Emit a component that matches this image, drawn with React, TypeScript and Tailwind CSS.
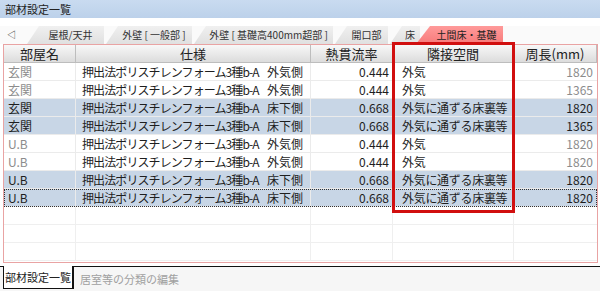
import React from "react";

interface Row {
    room: string;
    spec: string;
    side: string;
    u: string;
    adj: string;
    len: string;
    sel: boolean;
    focus?: boolean;
}

const spec = "押出法ポリスチレンフォーム3種b-A";

const rows: Row[] = [
    { room: "玄関", spec, side: "外気側", u: "0.444", adj: "外気", len: "1820", sel: false },
    { room: "玄関", spec, side: "外気側", u: "0.444", adj: "外気", len: "1365", sel: false },
    { room: "玄関", spec, side: "床下側", u: "0.668", adj: "外気に通ずる床裏等", len: "1820", sel: true },
    { room: "玄関", spec, side: "床下側", u: "0.668", adj: "外気に通ずる床裏等", len: "1365", sel: true },
    { room: "U.B", spec, side: "外気側", u: "0.444", adj: "外気", len: "1820", sel: false },
    { room: "U.B", spec, side: "外気側", u: "0.444", adj: "外気", len: "1820", sel: false },
    { room: "U.B", spec, side: "床下側", u: "0.668", adj: "外気に通ずる床裏等", len: "1820", sel: true },
    { room: "U.B", spec, side: "床下側", u: "0.668", adj: "外気に通ずる床裏等", len: "1820", sel: true, focus: true },
];

const tabs = [
    { label: "屋根/天井", w: "w-[77px]" },
    { label: "外壁 [ 一般部 ]", w: "w-[86px]" },
    { label: "外壁 [ 基礎高400mm超部 ]", w: "w-[139px]" },
    { label: "開口部", w: "w-[53px]" },
    { label: "床", w: "w-[30px]" },
];

const headers = ["部屋名", "仕様", "熱貫流率", "隣接空間", "周長(mm)"];

const cols = "grid grid-cols-[72px_235px_82px_121px_83px]";

export default function App() {
    return (
        <div className="relative w-[600px] h-[291px] overflow-hidden bg-white font-['Noto_Sans_CJK_JP',sans-serif] text-[#1e1e1e]">
            {/* Title bar */}
            <div className="h-[18px] bg-gradient-to-b from-[#c9dbf0] to-[#bcd1ea] flex items-center pl-[5px] text-[11px] leading-none text-[#222]">
                部材設定一覧
            </div>

            {/* Sheet tabs */}
            <div className="mt-[8px] h-[18px] flex items-stretch bg-[#fafafa]">
                <div className="w-[27px] flex items-center pl-[7px] text-[9px] text-[#333]">◁</div>
                {tabs.map((t) => (
                    <div
                        key={t.label}
                        className={`${t.w} mr-[2px] bg-gradient-to-b from-[#f0f0f0] to-[#e0e0e0] [clip-path:polygon(12px_0,100%_0,100%_100%,0_100%)] flex items-center justify-center pl-[10px] text-[10px] leading-none text-[#333] whitespace-nowrap`}
                    >
                        {t.label}
                    </div>
                ))}
                <div className="w-[87px] -ml-[6px] bg-gradient-to-b from-[#ff9a9a] to-[#f77a7a] [clip-path:polygon(14px_0,100%_0,100%_100%,0_100%)] flex items-center justify-center pl-[14px] text-[10px] leading-none text-[#222] whitespace-nowrap">
                    土間床・基礎
                </div>
            </div>

            {/* Grid */}
            <div className="ml-[3px] w-[595px] h-[219px] border border-[#e9a3a3] bg-white">
                <div className={`${cols} h-[18px]`}>
                    {headers.map((h) => (
                        <div
                            key={h}
                            className="flex items-center justify-center bg-gradient-to-b from-[#f8f8f8] to-[#dcdcdc] border-r border-b border-[#bdbdbd] text-[13px] leading-none text-[#222]"
                        >
                            {h}
                        </div>
                    ))}
                </div>
                {rows.map((r, i) => (
                    <div
                        key={i}
                        className={`${cols} h-[18px] text-[12px] leading-none ${r.sel ? "bg-[#c8d6e6]" : "bg-white"} ${r.focus ? "outline outline-1 outline-dotted outline-[#333] -outline-offset-1" : ""}`}
                    >
                        <div className={`flex items-center pl-[4px] border-r border-b border-[#ebebeb] ${r.sel ? "text-[#1e1e1e]" : "text-[#8c8c8c]"}`}>
                            {r.room}
                        </div>
                        <div className="flex items-center pl-[6px] border-r border-b border-[#ebebeb] whitespace-nowrap">
                            <span className="w-[185px] tracking-[-0.9px]">{r.spec}</span>
                            <span>{r.side}</span>
                        </div>
                        <div className="flex items-center justify-end pr-[3px] border-r border-b border-[#ebebeb]">
                            {r.u}
                        </div>
                        <div className="flex items-center pl-[9px] border-r border-b border-[#ebebeb] whitespace-nowrap tracking-[-0.3px]">
                            {r.adj}
                        </div>
                        <div className={`flex items-center justify-end pr-[4px] border-b border-[#ebebeb] ${r.sel ? "text-[#1e1e1e]" : "text-[#8c8c8c]"}`}>
                            {r.len}
                        </div>
                    </div>
                ))}
                {[0, 1, 2].map((i) => (
                    <div key={i} className={`${cols} h-[18px]`}>
                        <div className="border-r border-b border-[#efefef]" />
                        <div className="border-r border-b border-[#efefef]" />
                        <div className="border-r border-b border-[#efefef]" />
                        <div className="border-r border-b border-[#efefef]" />
                        <div className="border-b border-[#efefef]" />
                    </div>
                ))}
            </div>

            {/* Highlight */}
            <div className="absolute left-[392px] top-[42px] w-[123px] h-[171px] border-[3px] border-[#d10f0f]" />

            {/* Bottom tabs */}
            <div className="mt-[3px] h-[25px] flex border-t border-[#111] bg-[#f6f6f6]">
                <div className="ml-[3px] -mt-px w-[71px] h-[23px] bg-white border-l border-r-2 border-b border-[#111] flex items-center justify-center text-[11px] leading-none text-[#222]">
                    部材設定一覧
                </div>
                <div className="pl-[6px] flex items-center text-[11px] leading-none text-[#a0a0a0]">
                    居室等の分類の編集
                </div>
            </div>
        </div>
    );
}
